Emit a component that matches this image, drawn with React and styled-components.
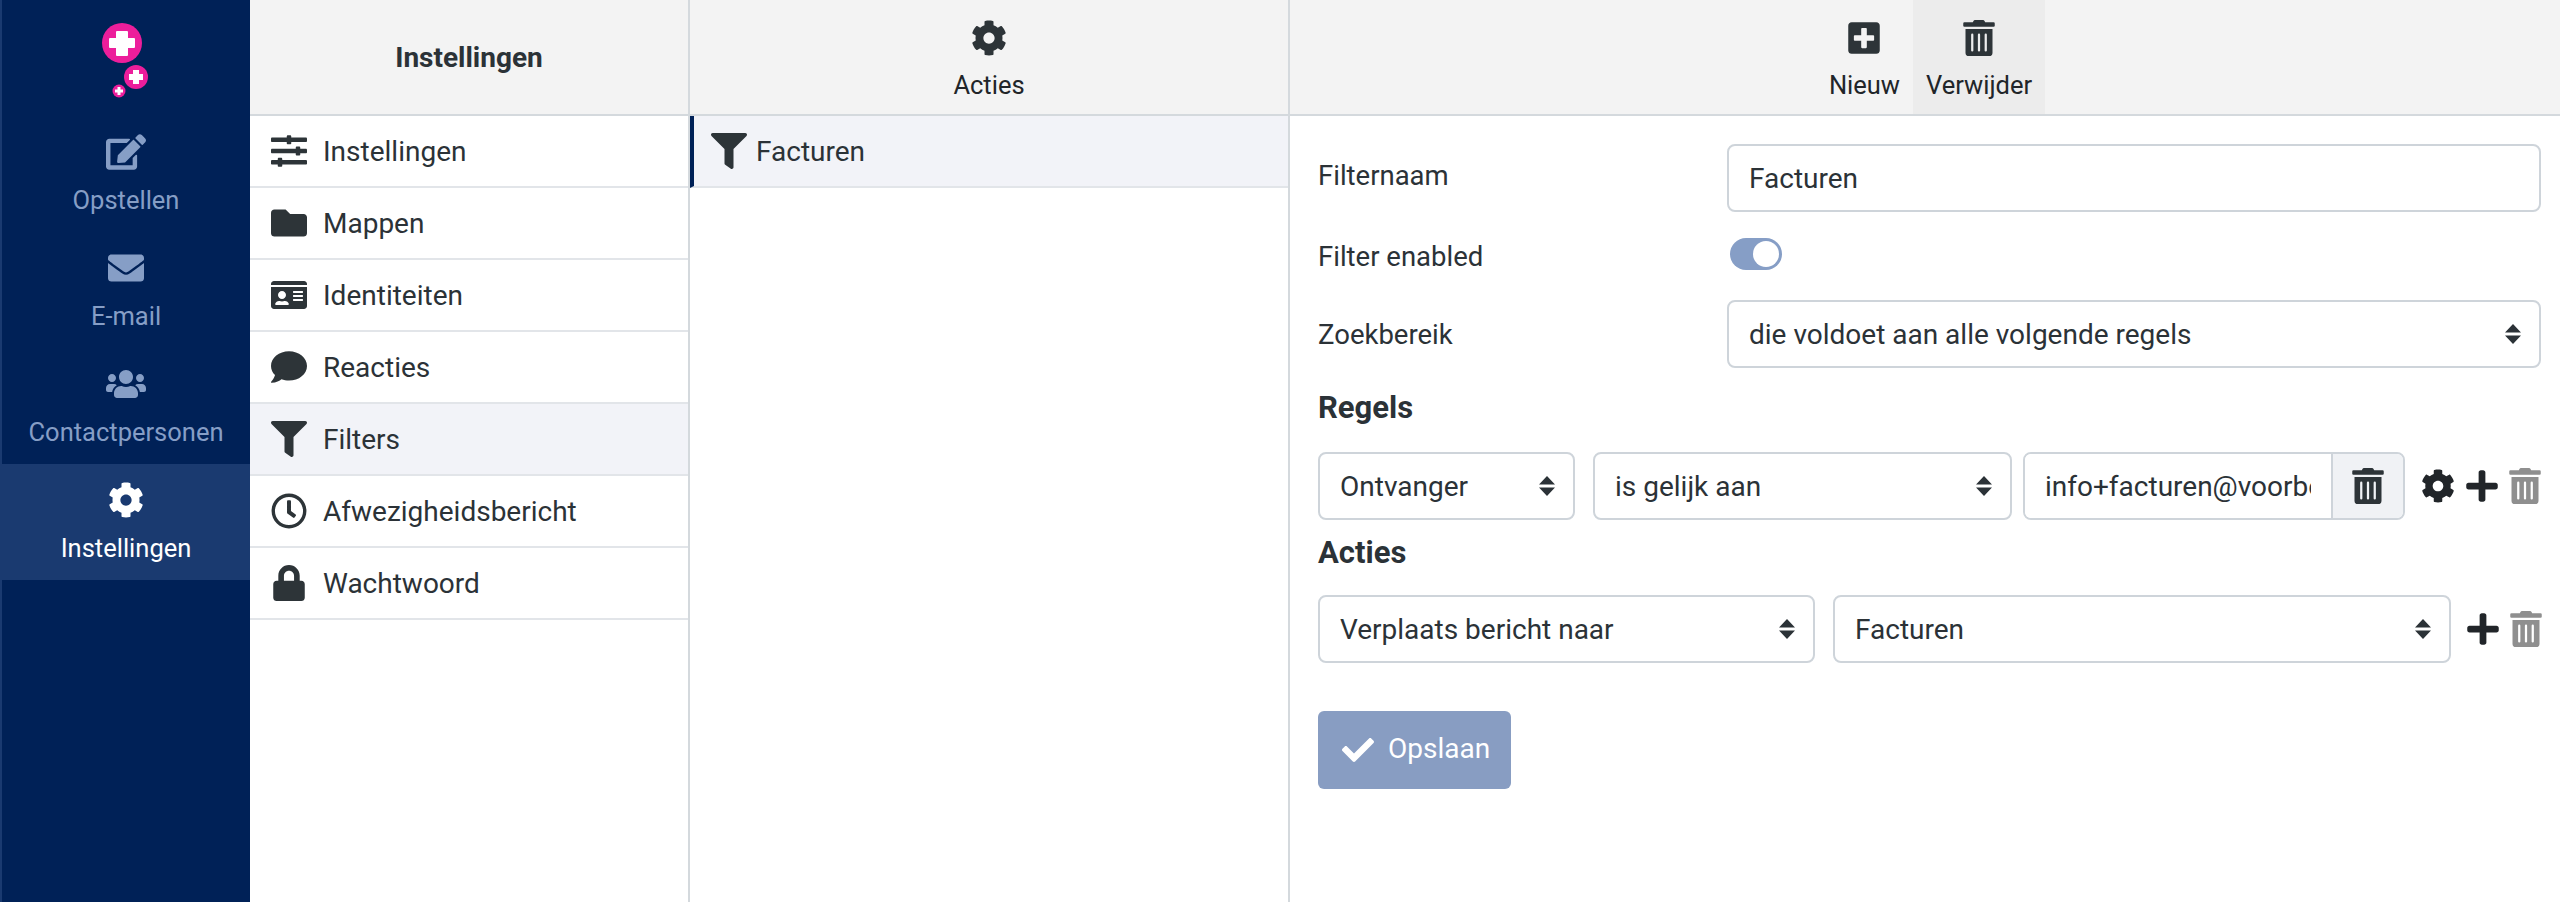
import React from "react"
import styled, { createGlobalStyle } from "styled-components"
import {
  FaCheck,
  FaCog,
  FaComment,
  FaEdit,
  FaEnvelope,
  FaFilter,
  FaFolder,
  FaIdCard,
  FaLock,
  FaPlus,
  FaPlusSquare,
  FaRegClock,
  FaSlidersH,
  FaTrashAlt,
  FaUsers,
} from "react-icons/fa"

const GlobalStyle = createGlobalStyle`
  html, body {
    margin: 0;
    padding: 0;
    background: #fff;
  }
  * {
    box-sizing: border-box;
  }
  body {
    font-family: Roboto, "Liberation Sans", sans-serif;
    font-size: 28px;
    color: #212529;
  }
`

const Page = styled.div`
  display: grid;
  grid-template-columns: 250px 440px 600px 1fr;
  height: 902px;
  overflow: hidden;
`

const Sidebar = styled.nav`
  background: #002157;
  border-left: 2px solid #1a3a70;
`

const LogoBox = styled.div`
  height: 116px;
  display: flex;
  justify-content: center;
  padding-top: 23px;
  svg {
    width: 50px;
    height: 76px;
    margin-left: -2px;
  }
`

const SideItem = styled.div`
  height: 116px;
  display: flex;
  flex-direction: column;
  align-items: center;
  padding-top: 18px;
  background: ${(p) => (p.$active ? "#1a3a70" : "transparent")};
  color: ${(p) => (p.$active ? "#fff" : "#869ec6")};
  font-size: 25.5px;
  svg {
    height: 36px;
    width: 40px;
    margin-bottom: 15px;
  }
`

const Column = styled.section`
  display: flex;
  flex-direction: column;
  min-width: 0;
  border-right: ${(p) => (p.$last ? "none" : "2px solid #d4d9dd")};
`

const Header = styled.header`
  height: 116px;
  flex: none;
  background: #f3f3f3;
  border-bottom: 2px solid #d4d9dd;
  display: flex;
  justify-content: center;
  align-items: center;
`

const HeaderTitle = styled.div`
  font-weight: 700;
  font-size: 28px;
  color: #2b3237;
`

const ToolButton = styled.div`
  height: 114px;
  padding: 20px 13px 0;
  display: flex;
  flex-direction: column;
  align-items: center;
  background: ${(p) => (p.$hover ? "#ececec" : "transparent")};
  font-size: 25.5px;
  svg {
    height: 36px;
    width: 36px;
    color: #2d3438;
    margin-bottom: 14px;
  }
`

const Toolbar = styled.div`
  display: flex;
  margin-left: 11px;
`

const Row = styled.div`
  height: 72px;
  flex: none;
  display: flex;
  align-items: center;
  border-bottom: 2px solid #e2e5e9;
  padding-left: ${(p) => (p.$marked ? "17px" : "21px")};
  background: ${(p) => (p.$selected ? "#f2f3f8" : "#fff")};
  border-left: ${(p) => (p.$marked ? "4px solid #002157" : "none")};
  font-size: 28px;
  color: #2b3237;
`

const RowIcon = styled.span`
  width: 36px;
  height: 36px;
  display: flex;
  align-items: center;
  justify-content: center;
  color: #2d3438;
  margin-right: ${(p) => p.$gap || "16px"};
  svg {
    width: 36px;
    height: 36px;
  }
`

const Form = styled.form`
  padding: 28px 19px 0 28px;
`

const Field = styled.div`
  display: grid;
  grid-template-columns: 409px 1fr;
  align-items: center;
  height: ${(p) => p.$height};
  margin-bottom: ${(p) => p.$gap || "0"};
`

const Label = styled.label`
  font-size: 27.5px;
  color: #2b3237;
  transform: translateY(${(p) => p.$shift || "0"});
`

const TextInput = styled.input`
  width: 100%;
  height: 68px;
  border: 2px solid #ced4da;
  border-radius: 8px;
  padding: 0 20px;
  font: inherit;
  font-size: 28px;
  color: #2b3237;
  background: #fff;
  outline: none;
  min-width: 0;
`

const SelectWrap = styled.div`
  position: relative;
  width: ${(p) => p.$width || "100%"};
  margin-left: ${(p) => p.$left || "0"};
  flex: none;
  svg {
    position: absolute;
    right: 19px;
    top: 24px;
    width: 18px;
    height: 20px;
    pointer-events: none;
  }
`

const Select = styled.select`
  width: 100%;
  height: 68px;
  border: 2px solid #ced4da;
  border-radius: 8px;
  padding: 0 20px;
  font: inherit;
  font-size: 28px;
  color: #2b3237;
  background: #fff;
  appearance: none;
  outline: none;
`

const Toggle = styled.div`
  width: 52px;
  height: 32px;
  margin-left: 3px;
  margin-top: -4px;
  border-radius: 16px;
  background: #869ec6;
  display: flex;
  justify-content: flex-end;
  align-items: center;
  padding-right: 3px;
`

const Knob = styled.span`
  width: 26px;
  height: 26px;
  border-radius: 50%;
  background: #fff;
`

const Heading = styled.h5`
  margin: ${(p) => p.$top} 0 0;
  font-size: 31px;
  font-weight: 700;
  line-height: 40px;
  color: #2b3237;
`

const RuleRow = styled.div`
  display: flex;
  align-items: center;
  height: 68px;
  margin: ${(p) => p.$margin};
`

const InputGroup = styled.div`
  display: flex;
  width: 382px;
  margin-left: 11px;
  flex: none;
  height: 68px;
  border: 2px solid #ced4da;
  border-radius: 8px;
  overflow: hidden;
`

const GroupInput = styled.input`
  flex: 1;
  min-width: 0;
  border: none;
  padding: 0 20px;
  font: inherit;
  font-size: 28px;
  color: #2b3237;
  outline: none;
`

const Addon = styled.div`
  width: 72px;
  flex: none;
  background: #f0f2f5;
  border-left: 2px solid #ced4da;
  display: flex;
  align-items: center;
  justify-content: center;
  color: #2d3438;
  svg {
    width: 32px;
    height: 36px;
  }
`

const ActionIcons = styled.div`
  display: flex;
  align-items: center;
  flex: none;
  margin-left: ${(p) => p.$left};
  gap: 11px;
  svg {
    width: 32px;
    height: 36px;
  }
`

const ActionIcon = styled.span`
  display: flex;
  color: ${(p) => (p.$muted ? "#8f8f8f" : "#212529")};
  svg {
    width: ${(p) => p.$wide || "32px"};
  }
`

const SaveButton = styled.button`
  display: flex;
  align-items: center;
  gap: 12px;
  height: 78px;
  width: 193px;
  margin-top: 48px;
  padding: 0 0 4px 22px;
  border: none;
  border-radius: 6px;
  background: #889dc2;
  color: #fff;
  font: inherit;
  font-size: 28px;
  svg {
    width: 36px;
    height: 32px;
    margin-top: 4px;
  }
`

const Arrows = () => (
  <svg viewBox="0 0 18 20">
    <path d="M9 0l8 8.500H1zM9 20l-8-8.500h16z" fill="#2b3237" />
  </svg>
)

const Logo = () => (
  <svg viewBox="0 0 50 76">
    <g fill="#ec1e9b">
      <circle cx="22" cy="20" r="20" />
      <circle cx="36" cy="54" r="12" />
      <circle cx="19" cy="68" r="6.5" />
    </g>
    <path
      d="M17 8h10a1 1 0 0 1 1 1v6h6a1 1 0 0 1 1 1v8a1 1 0 0 1-1 1h-6v7a1 1 0 0 1-1 1H17a1 1 0 0 1-1-1v-7h-6a1 1 0 0 1-1-1v-8a1 1 0 0 1 1-1h6V9a1 1 0 0 1 1-1z"
      fill="#fff"
    />
    <path d="M33 47h6v4h4v6h-4v4h-6v-4h-4v-6h4z" fill="#fff" />
    <path d="M17.500 64h3v2.500h2.500v3h-2.500V72h-3v-2.500H15v-3h2.500z" fill="#fff" />
  </svg>
)

const sideItems = [
  { label: "Opstellen", icon: <FaEdit /> },
  { label: "E-mail", icon: <FaEnvelope /> },
  { label: "Contactpersonen", icon: <FaUsers /> },
  { label: "Instellingen", icon: <FaCog />, active: true },
]

const settings = [
  { label: "Instellingen", icon: <FaSlidersH /> },
  { label: "Mappen", icon: <FaFolder /> },
  { label: "Identiteiten", icon: <FaIdCard /> },
  { label: "Reacties", icon: <FaComment /> },
  { label: "Filters", icon: <FaFilter />, selected: true },
  { label: "Afwezigheidsbericht", icon: <FaRegClock /> },
  { label: "Wachtwoord", icon: <FaLock /> },
]

const App = () => (
  <Page>
    <GlobalStyle />
    <Sidebar>
      <LogoBox>
        <Logo />
      </LogoBox>
      {sideItems.map((item) => (
        <SideItem key={item.label} $active={item.active}>
          {item.icon}
          {item.label}
        </SideItem>
      ))}
    </Sidebar>

    <Column>
      <Header>
        <HeaderTitle>Instellingen</HeaderTitle>
      </Header>
      {settings.map((item) => (
        <Row key={item.label} $selected={item.selected}>
          <RowIcon>{item.icon}</RowIcon>
          {item.label}
        </Row>
      ))}
    </Column>

    <Column>
      <Header>
        <ToolButton>
          <FaCog />
          Acties
        </ToolButton>
      </Header>
      <Row $selected $marked>
        <RowIcon $gap="9px">
          <FaFilter />
        </RowIcon>
        Facturen
      </Row>
    </Column>

    <Column $last>
      <Header>
        <Toolbar>
          <ToolButton>
            <FaPlusSquare />
            Nieuw
          </ToolButton>
          <ToolButton $hover>
            <FaTrashAlt />
            Verwijder
          </ToolButton>
        </Toolbar>
      </Header>
      <Form>
        <Field $height="68px" $gap="10px">
          <Label $shift="-3px">Filternaam</Label>
          <TextInput readOnly value="Facturen" />
        </Field>
        <Field $height="68px" $gap="10px">
          <Label>Filter enabled</Label>
          <Toggle>
            <Knob />
          </Toggle>
        </Field>
        <Field $height="68px">
          <Label>Zoekbereik</Label>
          <SelectWrap>
            <Select>
              <option>die voldoet aan alle volgende regels</option>
            </Select>
            <Arrows />
          </SelectWrap>
        </Field>

        <Heading $top="20px">Regels</Heading>
        <RuleRow $margin="24px 0 0">
          <SelectWrap $width="257px">
            <Select>
              <option>Ontvanger</option>
            </Select>
            <Arrows />
          </SelectWrap>
          <SelectWrap $width="419px" $left="18px">
            <Select>
              <option>is gelijk aan</option>
            </Select>
            <Arrows />
          </SelectWrap>
          <InputGroup>
            <GroupInput readOnly value="info+facturen@voorbeeld.nl" />
            <Addon>
              <FaTrashAlt />
            </Addon>
          </InputGroup>
          <ActionIcons $left="16px">
            <ActionIcon $wide="34px">
              <FaCog />
            </ActionIcon>
            <ActionIcon>
              <FaPlus />
            </ActionIcon>
            <ActionIcon $muted>
              <FaTrashAlt />
            </ActionIcon>
          </ActionIcons>
        </RuleRow>

        <Heading $top="13px">Acties</Heading>
        <RuleRow $margin="22px 0 0">
          <SelectWrap $width="497px">
            <Select>
              <option>Verplaats bericht naar</option>
            </Select>
            <Arrows />
          </SelectWrap>
          <SelectWrap $width="618px" $left="18px">
            <Select>
              <option>Facturen</option>
            </Select>
            <Arrows />
          </SelectWrap>
          <ActionIcons $left="16px">
            <ActionIcon>
              <FaPlus />
            </ActionIcon>
            <ActionIcon $muted>
              <FaTrashAlt />
            </ActionIcon>
          </ActionIcons>
        </RuleRow>

        <SaveButton type="button">
          <FaCheck />
          Opslaan
        </SaveButton>
      </Form>
    </Column>
  </Page>
)

export default App
